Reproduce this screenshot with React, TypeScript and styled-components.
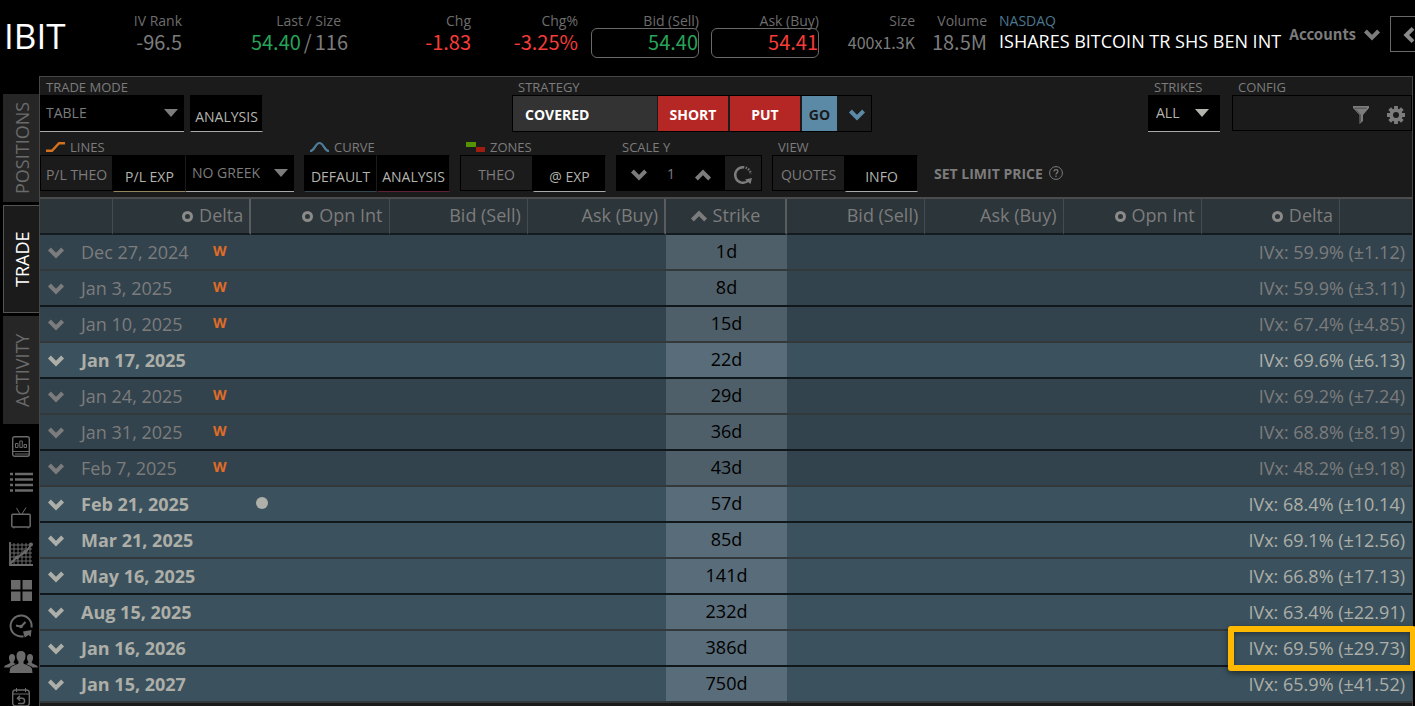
import React from "react";
import styled, { createGlobalStyle, css } from "styled-components";

const sans = `"Open Sans", "Noto Sans", sans-serif`;
const quoteFont = `"Noto Sans CJK SC", "Open Sans", sans-serif`;

const GlobalStyle = createGlobalStyle`
  *, *::before, *::after { box-sizing: border-box; }
  body { margin: 0; background: #000; font-family: ${sans}; color: #7c7c7c; }
  button, select, input { font: inherit; color: inherit; margin: 0; padding: 0; border: 0; border-radius: 0; background: none; }
  button { cursor: pointer; }
  svg { display: block; flex: none; overflow: visible; }
`;

const Page = styled.div`
  height: 100vh;
  overflow: hidden;
  display: flex;
  flex-direction: column;
  background: #000;
`;

/* ---------- quote header ---------- */

const QuoteBar = styled.header`
  flex: none;
  height: 76px;
  display: flex;
  align-items: flex-start;
  padding-top: 13px;
  overflow: hidden;
`;

const Ticker = styled.h1`
  flex: none;
  margin: 0;
  padding-left: 4px;
  width: 82px;
  font-size: 35px;
  line-height: 46px;
  font-weight: 400;
  color: #fff;
`;

const Quote = styled.div<{ $width: number }>`
  flex: none;
  width: ${(p) => p.$width}px;
  display: flex;
  flex-direction: column;
  align-items: flex-end;
`;

const QuoteLabel = styled.span<{ $inset?: boolean }>`
  font-size: 14px;
  line-height: 15px;
  white-space: nowrap;
  color: #6d6d6d;
  padding-right: ${(p) => (p.$inset ? 7 : 0)}px;
`;

type Tone = "up" | "down" | "flat";
const tones: Record<Tone, string> = { up: "#27a35a", down: "#f53c38", flat: "#7c7c7c" };

const valueText = css<{ $tone: Tone; $small?: boolean }>`
  display: flex;
  gap: 3px;
  font-family: ${quoteFont};
  font-size: ${(p) => (p.$small ? 16 : 20)}px;
  line-height: 28px;
  white-space: nowrap;
  color: ${(p) => tones[p.$tone]};
`;

const QuoteValue = styled.span<{ $tone: Tone; $small?: boolean }>`
  ${valueText}
`;

const Muted = styled.span`
  color: #7c7c7c;
`;

const PriceButton = styled.button<{ $tone: Tone }>`
  ${valueText}
  width: 108px;
  height: 30px;
  line-height: 26px;
  padding-bottom: 2px;
  justify-content: flex-end;
  border: 1px solid #6a6a6a;
  border-radius: 6px;
`;

const Listing = styled.div`
  flex: 1 0 auto;
  display: flex;
  flex-direction: column;
  padding-left: 12px;
  white-space: nowrap;
`;

const Exchange = styled.span`
  font-size: 14px;
  line-height: 16px;
  color: #4d7791;
`;

const Company = styled.span`
  font-size: 18px;
  line-height: 24px;
  color: #fff;
`;

const AccountsButton = styled.button`
  display: flex;
  align-items: center;
  gap: 8px;
  margin-left: 8px;
  height: 42px;
  font-family: ${quoteFont};
  font-weight: 700;
  font-size: 15px;
  line-height: 24px;
  color: #7c7c7c;
`;

const DrawerButton = styled.button`
  flex: none;
  width: 40px;
  height: 36px;
  margin: 3px -15px 0 10px;
  padding-left: 10px;
  border: 1px solid #6a6a6a;
  color: #8a8a8a;
`;

/* ---------- side navigation ---------- */

const Body = styled.div`
  flex: 1;
  min-height: 0;
  display: flex;
`;

const Side = styled.nav`
  flex: none;
  width: 39px;
  padding: 18px 0 0 3px;
  display: flex;
  flex-direction: column;
  overflow: hidden;
`;

const SideTab = styled.button<{ $active?: boolean }>`
  flex: none;
  height: 108px;
  margin-bottom: 3px;
  display: flex;
  align-items: center;
  justify-content: center;
  writing-mode: vertical-rl;
  rotate: 180deg;
  font-size: 18px;
  line-height: 20px;
  color: ${(p) => (p.$active ? "#fff" : "#6a6a6a")};
  background: ${(p) => (p.$active ? "#1b1b1b" : "#262626")};
  border: 1px solid ${(p) => (p.$active ? "#555" : "#262626")};
  border-left: 0;
`;

const SideIcons = styled.div`
  display: flex;
  flex-direction: column;
  padding-top: 1px;
  color: #6a6a6a;
`;

const SideIcon = styled.button`
  flex: none;
  height: 36px;
  display: grid;
  place-items: center;
`;

/* ---------- toolbar ---------- */

const Panel = styled.main`
  flex: 1;
  min-width: 0;
  margin-right: 2px;
  border: 1px solid #464646;
  border-bottom: 0;
  background: #1b1b1b;
`;

const PrimaryTools = styled.div`
  height: 60px;
  display: grid;
  grid-template-columns: 472px 1fr auto;
`;

const SecondaryTools = styled.div`
  height: 60px;
  display: flex;
  gap: 10px;
`;

const Group = styled.div`
  display: flex;
  flex-direction: column;
`;

const Groups = styled.div`
  display: flex;
  gap: 12px;
`;

const GroupLabel = styled.span`
  display: flex;
  align-items: center;
  gap: 5px;
  height: 18px;
  padding: 2px 0 0 6px;
  font-size: 13px;
  line-height: 16px;
  white-space: nowrap;
`;

const Controls = styled.div<{ $gap?: number }>`
  display: flex;
  gap: ${(p) => p.$gap ?? 0}px;
  height: 37px;
`;

const Toggle = styled.button<{ $on?: boolean; $line?: string }>`
  width: 73px;
  height: ${(p) => (p.$on ? 37 : 36)}px;
  padding-top: ${(p) => (p.$on ? 6 : 3)}px;
  font-size: 14px;
  line-height: 20px;
  white-space: nowrap;
  color: ${(p) => (p.$on ? "#b4b4ae" : "#7c7c7c")};
  background: ${(p) => (p.$on ? "#000" : "#1b1b1b")};
  border: 1px solid #000;
  ${(p) => p.$on && `border-right-color: #1b1b1b; border-bottom: 1px solid ${p.$line ?? "#a8a8a8"};`}
`;

const SelectBox = styled.div<{ $width: number; $bright?: boolean }>`
  width: ${(p) => p.$width}px;
  height: 37px;
  display: grid;
  align-items: center;
  background: #000;
  border-bottom: 1px solid #a8a8a8;
  color: ${(p) => (p.$bright ? "#b4b4ae" : "#7c7c7c")};
  & > * { grid-area: 1 / 1; }
  & > svg { justify-self: end; margin-right: ${(p) => (p.$bright ? 11 : 6)}px; pointer-events: none; }
`;

const Select = styled.select<{ $pad?: number }>`
  appearance: none;
  width: 100%;
  height: 36px;
  padding-left: ${(p) => p.$pad ?? 6}px;
  font-size: 14px;
  line-height: 20px;
  outline: 0;
`;

const StrategyBar = styled.div`
  display: flex;
  width: 360px;
  height: 37px;
  border: 1px solid #000;
`;

const StrategyName = styled.button`
  width: 144px;
  padding: 2px 0 0 12px;
  text-align: left;
  font-size: 14px;
  font-weight: 700;
  color: #fff;
  background: #333;
`;

const LegButton = styled.button`
  width: 70px;
  margin: 0 1px;
  padding-top: 2px;
  font-size: 14px;
  font-weight: 700;
  color: #fff;
  background: #b52724;
`;

const GoButton = styled.button`
  width: 35px;
  margin-left: 1px;
  padding-top: 2px;
  font-size: 14px;
  font-weight: 700;
  color: #1b1b1b;
  background: #5b8aa6;
`;

const MoreButton = styled.button`
  flex: 1;
  display: grid;
  place-items: center;
  padding-left: 5px;
  color: #5b8aa6;
`;

const ScaleBox = styled.div`
  display: flex;
  width: 146px;
  height: 36px;
  border: 1px solid #000;
`;

const ScaleStepper = styled.div`
  width: 108px;
  display: flex;
  align-items: center;
  justify-content: center;
  gap: 16px;
  padding-top: 2px;
  background: #000;
`;

const ScaleInput = styled.input`
  width: 16px;
  text-align: center;
  font-size: 14px;
  line-height: 20px;
`;

const IconButton = styled.button`
  display: grid;
  place-items: center;
`;

const ResetButton = styled(IconButton)`
  flex: 1;
  padding-top: 3px;
`;

const ConfigBox = styled.div`
  width: 180px;
  height: 36px;
  display: flex;
  align-items: center;
  justify-content: flex-end;
  gap: 18px;
  padding: 3px 6px 0 0;
  border: 1px solid #000;
`;

const LimitButton = styled.button`
  align-self: flex-start;
  display: flex;
  align-items: center;
  gap: 6px;
  height: 36px;
  margin: 18px 0 0 6px;
  font-size: 14px;
  font-weight: 700;
  white-space: nowrap;
`;

/* ---------- option chain ---------- */

const Chain = styled.table`
  width: 100%;
  table-layout: fixed;
  border-collapse: separate;
  border-spacing: 0;
  border-top: 2px solid #4c4c4c;
  font-size: 18px;
  line-height: 24px;
`;

const Head = styled.th<{ $center?: boolean; $bright?: boolean; $last?: boolean }>`
  height: 36px;
  padding: 0 ${(p) => (p.$center ? 0 : 6)}px 2px 0;
  font-weight: 400;
  background: #2c353a;
  border-right: ${(p) => (p.$last ? 0 : p.$bright ? 2 : 1)}px solid ${(p) => (p.$bright ? "#5a5d60" : "#454c51")};
  border-bottom: 2px solid #141b1f;
`;

const HeadInner = styled.span<{ $center?: boolean }>`
  display: flex;
  align-items: center;
  justify-content: ${(p) => (p.$center ? "center" : "flex-end")};
  gap: 6px;
  white-space: nowrap;
`;

const Row = styled.tr<{ $monthly: boolean }>`
  color: ${(p) => (p.$monthly ? "#aeaea8" : "#7c7c7c")};
  & > td { background: ${(p) => (p.$monthly ? "#3b525e" : "#32434d")}; }
  & > td:nth-child(2) { background: ${(p) => (p.$monthly ? "#596c79" : "#4f5f69")}; }
  &:nth-child(odd) > td { border-bottom: 2px solid #33383b; }
  &:nth-child(even) > td { border-bottom: 2px solid #11181c; }
`;

const Cell = styled.td`
  position: relative;
  height: 36px;
  padding: 0;
`;

const DaysCell = styled(Cell)`
  text-align: center;
  color: #000;
  padding-bottom: 2px;
`;

const IvCell = styled(Cell)`
  text-align: right;
  padding-right: 7px;
`;

const Expiry = styled.div`
  display: flex;
  align-items: center;
  padding-left: 8px;
`;

const ExpiryDate = styled.span<{ $monthly: boolean }>`
  width: 132px;
  margin-left: 17px;
  white-space: nowrap;
  font-weight: ${(p) => (p.$monthly ? 700 : 400)};
`;

const WeeklyMark = styled.span`
  height: 24px;
  font-size: 14px;
  line-height: 22px;
  font-weight: 700;
  color: #e06c26;
`;

const PositionDot = styled.span`
  width: 12px;
  height: 12px;
  margin: 0 0 3px 43px;
  border-radius: 50%;
  background: #b0b0aa;
`;

const Highlight = styled.span`
  position: absolute;
  z-index: 2;
  right: -4px;
  top: -5px;
  width: 188px;
  height: 45px;
  border: 6px solid #ffb900;
  border-radius: 3px;
  box-shadow: 0 2px 6px rgba(0, 0, 0, 0.5), inset 0 2px 5px rgba(0, 0, 0, 0.35);
  pointer-events: none;
`;

/* ---------- icons ---------- */

const turns = { down: 0, up: 180, left: 90 };
const Chevron = ({ to = "down" }: { to?: keyof typeof turns }) => (
  <svg width="16" height="16" viewBox="0 -1 16 16" fill="none" stroke="currentColor" strokeWidth="4">
    <path d="M1.4 4 8 10.700l6.600-6.700" transform={`rotate(${turns[to]} 8 8)`} />
  </svg>
);

const Caret = () => (
  <svg width="14" height="8" viewBox="0 0 14 8" fill="currentColor">
    <path d="M0 0h14L7 8z" />
  </svg>
);

const Ring = () => (
  <svg width="11" height="11" viewBox="0 0 11 11" fill="none" stroke="#8a8a88" strokeWidth="3">
    <circle cx="5.5" cy="6.5" r="4" />
  </svg>
);

const LinesMark = () => (
  <svg width="19" height="10" viewBox="0 0 19 10" fill="none" stroke="#d4711f" strokeWidth="2.400">
    <path d="M0 8.800h6l7-7.600h6" />
  </svg>
);

const CurveMark = () => (
  <svg width="19" height="10" viewBox="0 0 19 10" fill="none" stroke="#4f7d99" strokeWidth="2.200">
    <path d="M0 9C5 9 5 1 9.500 1S14 9 19 9" />
  </svg>
);

const ZonesMark = () => (
  <svg width="19" height="10" viewBox="0 0 19 10">
    <path fill="#559305" d="M0 0h10v5H0z" />
    <path fill="#9e1c10" d="M10 5h9v5h-9z" />
  </svg>
);

const Reset = () => (
  <svg width="20" height="20" viewBox="0 0 20 20" fill="none" stroke="currentColor">
    <path strokeWidth="2.400" strokeDasharray="1.300 1.400" d="M10 2.200A7.800 7.800 0 0 1 17.800 9" />
    <path strokeWidth="2.400" d="M10 2.200A7.800 7.800 0 1 0 15.500 15.500" />
    <path fill="currentColor" stroke="none" d="M12 14.500l7-1.500-1.500 6z" />
  </svg>
);

const Funnel = () => (
  <svg width="16" height="18" viewBox="0 0 16 18" fill="currentColor">
    <path d="M0 0h16v2L10 9v6l-3.500 3V9L0 2z" />
    <path d="M1.500 2.200h12" stroke="#444" strokeWidth=".8" />
    <path d="M3 3.500 7.500 9v7" stroke="#444" strokeWidth=".7" fill="none" />
  </svg>
);

const Gear = () => (
  <svg width="18" height="18" viewBox="0 0 18 18" fill="none" stroke="currentColor">
    <circle cx="9" cy="9" r="4.800" strokeWidth="3.600" />
    {[0, 45, 90, 135].map((a) => (
      <path key={a} d="M9 0v3.500M9 14.500V18" strokeWidth="3.800" transform={`rotate(${a} 9 9)`} />
    ))}
  </svg>
);

const Help = () => (
  <svg width="14" height="14" viewBox="0 0 14 14" fill="none" stroke="currentColor">
    <circle cx="7" cy="7" r="6.400" />
    <path strokeWidth="1.200" d="M5 5.500C5 4 6 3.600 7 3.600s2 .6 2 1.700C9 6.700 7 6.700 7 8.500M7 9.600v1.300" />
  </svg>
);

const JournalIcon = () => (
  <svg width="18" height="21" viewBox="0 0 18 21" fill="none" stroke="currentColor">
    <rect x=".7" y=".7" width="16.600" height="19.600" rx="2" strokeWidth="1.400" />
    <path d="M1 15.500h16M3 18h14" strokeWidth="1.200" />
    <path d="M3.500 11.500v-4h2.500v4zM7.800 11.500v-6.500h2.500v6.500zM12 11.500v-3h2.500v3z" />
  </svg>
);

const ListIcon = () => (
  <svg width="23" height="21" viewBox="0 0 23 21" stroke="currentColor" strokeWidth="2.600">
    <path d="M0 2h3M5 2h18M0 7.500h3M5 7.500h18M0 13h3M5 13h18M0 18.500h3M5 18.500h18" />
  </svg>
);

const TvIcon = () => (
  <svg width="20" height="22" viewBox="0 0 20 22" fill="none" stroke="currentColor">
    <rect x=".8" y="7.300" width="18.400" height="12.600" rx="1" strokeWidth="1.500" />
    <path d="M9 7 5.500 1M11 7l4-6.500M3 20v1.500M17 20v1.500" />
  </svg>
);

const GridChartIcon = () => (
  <svg width="24" height="24" viewBox="0 0 24 24" fill="none" stroke="currentColor">
    <path strokeWidth="1.800" d="M1 0v23h23" />
    <path d="M5 1v21M9 1v21M13 1v21M17 1v21M21 1v21M2 3h21M2 7h21M2 11h21M2 15h21M2 19h21" />
    <path strokeWidth="2" d="M1 22 6 17l3-2 4-3 4-2 5-7" />
    <circle cx="22" cy="2.500" r="2" fill="currentColor" stroke="none" />
    <circle cx="8" cy="15.500" r="2" fill="currentColor" stroke="none" />
    <circle cx="16" cy="10" r="2" fill="currentColor" stroke="none" />
  </svg>
);

const TilesIcon = () => (
  <svg width="21" height="21" viewBox="0 0 21 21" fill="currentColor">
    <path d="M0 0h9.500v9.500H0zM11.500 0H21v9.500h-9.500zM0 11.500h9.500V21H0zM11.500 11.500H21V21h-9.500z" />
  </svg>
);

const ClockIcon = () => (
  <svg width="24" height="24" viewBox="0 0 24 24" fill="none" stroke="currentColor">
    <path strokeWidth="2" d="M14.500 22.200A10.500 10.500 0 1 1 22.500 13.500" />
    <path fill="currentColor" stroke="none" d="M14 17.500 22.500 16l-.8 7-2-2-4 2.500z" />
    <path strokeWidth="2" d="M7 11.500l5 1.200L16.500 8" />
    <circle cx="12" cy="12.500" r="1.800" fill="currentColor" stroke="none" />
  </svg>
);

const PeopleIcon = () => (
  <svg width="34" height="22" viewBox="0 0 34 22" fill="currentColor">
    <path d="M17 0c3 0 4.500 2 4.500 4.800 0 2.700-1 4.800-2 5.800v1.900c2 1.500 8 2.500 8.500 5.500l.5 4H5.500l.5-4c.5-3 6.500-4 8.500-5.500v-1.900c-1-1-2-3.100-2-5.800C12.500 2 14 0 17 0z" />
    <path d="M8 3c2 0 3 1.500 3 3.500S10.300 10 9.700 10.700V12L12 13c-3 1.300-5.500 2-6.500 3.500H0c.2-2.500 4-3 6.200-4.500v-1.300C5.500 10 5 8.500 5 6.500S6 3 8 3zM26 3c-2 0-3 1.500-3 3.500s.7 3.500 1.300 4.200V12L22 13c3 1.300 5.500 2 6.500 3.500H34c-.2-2.500-4-3-6.200-4.500v-1.300c.7-.7 1.200-2.200 1.200-4.200S28 3 26 3z" />
  </svg>
);

const CalendarBackIcon = () => (
  <svg width="18" height="20" viewBox="0 0 18 20" fill="none" stroke="currentColor">
    <rect x=".7" y="2" width="16.600" height="16" rx="3" strokeWidth="1.400" />
    <path d="M1 6h16M4.500 0v4M13.500 0v4" />
    <path strokeWidth="1.500" d="M8 7.800 5.500 10.300 8 12.800M5.500 10.300h4.500a2.600 2.600 0 1 1 0 5.200H6" />
  </svg>
);

/* ---------- data ---------- */

const navIcons = [
  ["Journal", <JournalIcon />],
  ["Watchlist", <ListIcon />],
  ["Live TV", <TvIcon />],
  ["Charts", <GridChartIcon />],
  ["Tiles", <TilesIcon />],
  ["Alerts", <ClockIcon />],
  ["Follow", <PeopleIcon />],
  ["Calendar", <CalendarBackIcon />],
] as const;

interface Expiration {
  date: string;
  days: number;
  iv: string;
  move: string;
  weekly?: boolean;
  position?: boolean;
  marked?: boolean;
}

const expirations: Expiration[] = [
  { date: "Dec 27, 2024", days: 1, iv: "59.9", move: "1.12", weekly: true },
  { date: "Jan 3, 2025", days: 8, iv: "59.9", move: "3.11", weekly: true },
  { date: "Jan 10, 2025", days: 15, iv: "67.4", move: "4.85", weekly: true },
  { date: "Jan 17, 2025", days: 22, iv: "69.6", move: "6.13" },
  { date: "Jan 24, 2025", days: 29, iv: "69.2", move: "7.24", weekly: true },
  { date: "Jan 31, 2025", days: 36, iv: "68.8", move: "8.19", weekly: true },
  { date: "Feb 7, 2025", days: 43, iv: "48.2", move: "9.18", weekly: true },
  { date: "Feb 21, 2025", days: 57, iv: "68.4", move: "10.14", position: true },
  { date: "Mar 21, 2025", days: 85, iv: "69.1", move: "12.56" },
  { date: "May 16, 2025", days: 141, iv: "66.8", move: "17.13" },
  { date: "Aug 15, 2025", days: 232, iv: "63.4", move: "22.91" },
  { date: "Jan 16, 2026", days: 386, iv: "69.5", move: "29.73", marked: true },
  { date: "Jan 15, 2027", days: 750, iv: "65.9", move: "41.52" },
];

const headings: { text: string; ring?: boolean; sort?: boolean; bright?: boolean }[] = [
  { text: "" },
  { text: "Delta", ring: true, bright: true },
  { text: "Opn Int", ring: true },
  { text: "Bid (Sell)" },
  { text: "Ask (Buy)", bright: true },
  { text: "Strike", sort: true, bright: true },
  { text: "Bid (Sell)" },
  { text: "Ask (Buy)" },
  { text: "Opn Int", ring: true },
  { text: "Delta", ring: true },
  { text: "" },
];

export default function App() {
  return (
    <Page>
      <GlobalStyle />
      <QuoteBar>
        <Ticker>IBIT</Ticker>
        <Quote $width={100}>
          <QuoteLabel>IV Rank</QuoteLabel>
          <QuoteValue $tone="flat">-96.5</QuoteValue>
        </Quote>
        <Quote $width={166}>
          <QuoteLabel $inset>Last / Size</QuoteLabel>
          <QuoteValue $tone="up">
            54.40<Muted>/</Muted><Muted>116</Muted>
          </QuoteValue>
        </Quote>
        <Quote $width={123}>
          <QuoteLabel>Chg</QuoteLabel>
          <QuoteValue $tone="down">-1.83</QuoteValue>
        </Quote>
        <Quote $width={107}>
          <QuoteLabel>Chg%</QuoteLabel>
          <QuoteValue $tone="down">-3.25%</QuoteValue>
        </Quote>
        <Quote $width={121}>
          <QuoteLabel>Bid (Sell)</QuoteLabel>
          <PriceButton $tone="up">54.40</PriceButton>
        </Quote>
        <Quote $width={120}>
          <QuoteLabel>Ask (Buy)</QuoteLabel>
          <PriceButton $tone="down">54.41</PriceButton>
        </Quote>
        <Quote $width={96}>
          <QuoteLabel>Size</QuoteLabel>
          <QuoteValue $tone="flat" $small>400x1.3K</QuoteValue>
        </Quote>
        <Quote $width={72}>
          <QuoteLabel>Volume</QuoteLabel>
          <QuoteValue $tone="flat">18.5M</QuoteValue>
        </Quote>
        <Listing>
          <Exchange>NASDAQ</Exchange>
          <Company>ISHARES BITCOIN TR SHS BEN INT</Company>
        </Listing>
        <AccountsButton>
          Accounts
          <Chevron />
        </AccountsButton>
        <DrawerButton aria-label="Open drawer">
          <Chevron to="left" />
        </DrawerButton>
      </QuoteBar>

      <Body>
        <Side>
          <SideTab>POSITIONS</SideTab>
          <SideTab $active>TRADE</SideTab>
          <SideTab>ACTIVITY</SideTab>
          <SideIcons>
            {navIcons.map(([name, icon]) => (
              <SideIcon key={name} aria-label={name}>{icon}</SideIcon>
            ))}
          </SideIcons>
        </Side>

        <Panel>
          <PrimaryTools>
            <Group>
              <GroupLabel as="label" htmlFor="mode">TRADE MODE</GroupLabel>
              <Controls $gap={6}>
                <SelectBox $width={144}>
                  <Select id="mode"><option>TABLE</option></Select>
                  <Caret />
                </SelectBox>
                <Toggle $on>ANALYSIS</Toggle>
              </Controls>
            </Group>
            <Group>
              <GroupLabel>STRATEGY</GroupLabel>
              <StrategyBar>
                <StrategyName>COVERED</StrategyName>
                <LegButton>SHORT</LegButton>
                <LegButton>PUT</LegButton>
                <GoButton>GO</GoButton>
                <MoreButton aria-label="More strategies"><Chevron /></MoreButton>
              </StrategyBar>
            </Group>
            <Groups>
              <Group>
                <GroupLabel as="label" htmlFor="strikes">STRIKES</GroupLabel>
                <SelectBox $width={72} $bright>
                  <Select id="strikes" $pad={8}><option>ALL</option></Select>
                  <Caret />
                </SelectBox>
              </Group>
              <Group>
                <GroupLabel>CONFIG</GroupLabel>
                <ConfigBox>
                  <IconButton aria-label="Filter"><Funnel /></IconButton>
                  <IconButton aria-label="Settings"><Gear /></IconButton>
                </ConfigBox>
              </Group>
            </Groups>
          </PrimaryTools>

          <SecondaryTools>
            <Group>
              <GroupLabel><LinesMark />LINES</GroupLabel>
              <Controls>
                <Toggle>P/L THEO</Toggle>
                <Toggle $on $line="#94865c">P/L EXP</Toggle>
                <SelectBox $width={108}>
                  <Select aria-label="Greek"><option>NO GREEK</option></Select>
                  <Caret />
                </SelectBox>
              </Controls>
            </Group>
            <Group>
              <GroupLabel><CurveMark />CURVE</GroupLabel>
              <Controls>
                <Toggle $on $line="#35464f">DEFAULT</Toggle>
                <Toggle $on $line="#5e2238">ANALYSIS</Toggle>
              </Controls>
            </Group>
            <Group>
              <GroupLabel><ZonesMark />ZONES</GroupLabel>
              <Controls>
                <Toggle>THEO</Toggle>
                <Toggle $on>@ EXP</Toggle>
              </Controls>
            </Group>
            <Group>
              <GroupLabel as="label" htmlFor="scale">SCALE Y</GroupLabel>
              <ScaleBox>
                <ScaleStepper>
                  <IconButton aria-label="Decrease scale"><Chevron /></IconButton>
                  <ScaleInput id="scale" defaultValue="1" />
                  <IconButton aria-label="Increase scale"><Chevron to="up" /></IconButton>
                </ScaleStepper>
                <ResetButton aria-label="Reset scale"><Reset /></ResetButton>
              </ScaleBox>
            </Group>
            <Group>
              <GroupLabel>VIEW</GroupLabel>
              <Controls>
                <Toggle>QUOTES</Toggle>
                <Toggle $on>INFO</Toggle>
              </Controls>
            </Group>
            <LimitButton>SET LIMIT PRICE<Help /></LimitButton>
          </SecondaryTools>

          <Chain>
            <colgroup>
              <col width="73" /><col /><col /><col /><col /><col width="121" /><col /><col /><col /><col /><col width="72" />
            </colgroup>
            <thead>
              <tr>
                {headings.map((h, i) => (
                  <Head key={i} $bright={h.bright} $center={h.sort} $last={i === headings.length - 1}>
                    <HeadInner $center={h.sort}>
                      {h.ring && <Ring />}
                      {h.sort && <Chevron to="up" />}
                      {h.text}
                    </HeadInner>
                  </Head>
                ))}
              </tr>
            </thead>
            <tbody>
              {expirations.map((e) => (
                <Row key={e.date} $monthly={!e.weekly}>
                  <Cell colSpan={5}>
                    <Expiry>
                      <IconButton aria-label={`Expand ${e.date}`}><Chevron /></IconButton>
                      <ExpiryDate $monthly={!e.weekly}>{e.date}</ExpiryDate>
                      {e.weekly && <WeeklyMark>W</WeeklyMark>}
                      {e.position && <PositionDot />}
                    </Expiry>
                  </Cell>
                  <DaysCell>{`${e.days}d`}</DaysCell>
                  <IvCell colSpan={5}>
                    {`IVx: ${e.iv}% (±${e.move})`}
                    {e.marked && <Highlight />}
                  </IvCell>
                </Row>
              ))}
            </tbody>
          </Chain>
        </Panel>
      </Body>
    </Page>
  );
}
